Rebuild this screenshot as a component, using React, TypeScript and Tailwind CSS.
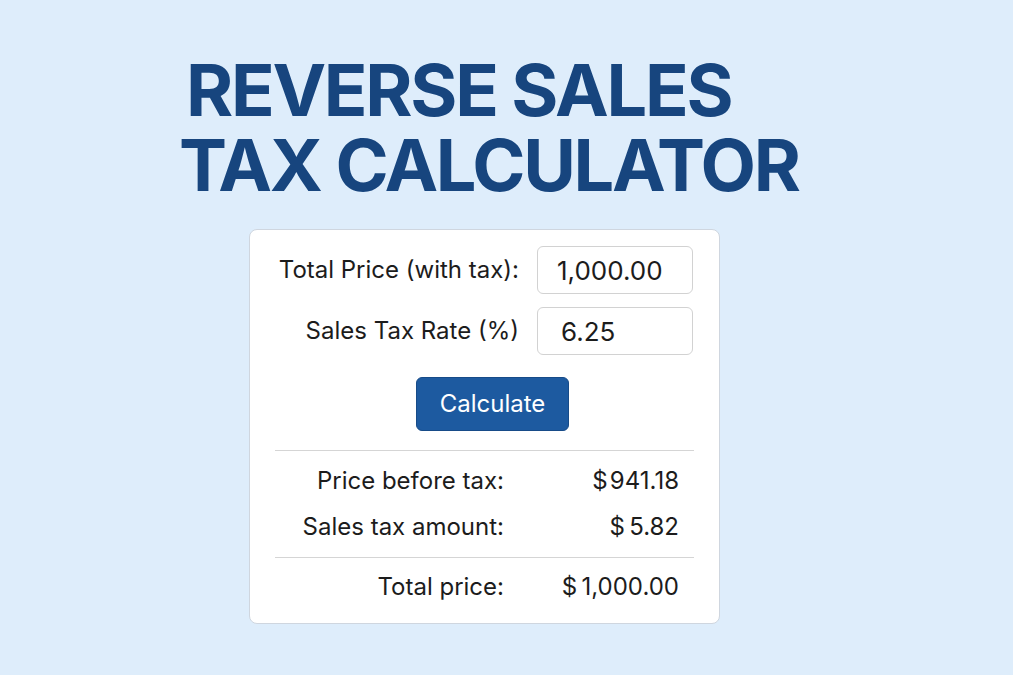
import { useState } from 'react';

function ResultRow({ label, value }: { label: string; value: string }) {
  return (
    <div className="flex items-center h-[46px]">
      <div className="w-[229px] text-right">{label}</div>
      <div className="flex-1 text-right pr-[15px]">{value}</div>
    </div>
  );
}

export default function App() {
  const [total, setTotal] = useState('1,000.00');
  const [rate, setRate] = useState('6.25');

  return (
    <div
      className="w-[1013px] h-[675px] bg-[#deedfb] overflow-hidden"
      style={{ fontFamily: 'Inter, "Liberation Sans", sans-serif' }}
    >
      <h1 className="pt-[52px] pl-[179px] indent-[7px] text-[72px] leading-[75px] font-bold text-[#17457e] tracking-[-2.3px]">
        REVERSE SALES
        <br />
        TAX CALCULATOR
      </h1>

      <div className="ml-[249px] mt-[27px] w-[471px] h-[395px] bg-white border border-[#cfd6df] rounded-[8px] text-[24px] text-[#1c1c1c]">
        <div className="pt-[16px] grid grid-cols-[269px_156px] gap-x-[18px] gap-y-[13px] items-center">
          <label className="text-right">Total Price (with tax):</label>
          <input
            value={total}
            onChange={(e) => setTotal(e.target.value)}
            className="h-[48px] w-[156px] border border-[#d2d2d2] rounded-[6px] pl-[19px] text-[26px] outline-none"
          />
          <label className="text-right">Sales Tax Rate (%)</label>
          <input
            value={rate}
            onChange={(e) => setRate(e.target.value)}
            className="h-[48px] w-[156px] border border-[#d2d2d2] rounded-[6px] pl-[23px] text-[26px] outline-none"
          />
        </div>

        <div className="flex justify-center mt-[22px] pl-[16px]">
          <button className="w-[153px] h-[54px] bg-[#1d5aa0] text-white text-[24px] rounded-[6px] border border-[#174b88]">
            Calculate
          </button>
        </div>

        <div className="mx-[25px] mt-[19px] border-t border-[#d5d5d5]">
          <div className="pt-[7px] pb-[7px]">
            <ResultRow label="Price before tax:" value={'$\u200a941.18'} />
            <ResultRow label="Sales tax amount:" value={'$\u20095.82'} />
          </div>
          <div className="border-t border-[#d5d5d5] pt-[6px]">
            <ResultRow label="Total price:" value={'$\u20091,000.00'} />
          </div>
        </div>
      </div>
    </div>
  );
}
